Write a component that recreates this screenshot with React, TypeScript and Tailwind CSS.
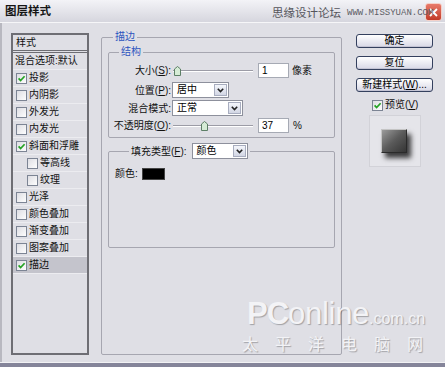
import React from 'react';

const F = "font-['Liberation_Sans','Noto_Sans_CJK_SC',sans-serif]";

function Check({ checked }: { checked?: boolean }) {
  return (
    <svg width="11" height="11" viewBox="0 0 11 11" className="shrink-0">
      <defs>
        <linearGradient id="cbg" x1="0" y1="0" x2="1" y2="1">
          <stop offset="0" stopColor="#dcdce2" />
          <stop offset="1" stopColor="#ffffff" />
        </linearGradient>
      </defs>
      <rect x="0.5" y="0.5" width="10" height="10" fill="url(#cbg)" stroke="#7c8494" />
      {checked && (
        <path d="M2.6 5.4 L4.6 7.6 L8.6 3.2" fill="none" stroke="#24a324" strokeWidth="1.7" />
      )}
    </svg>
  );
}

function Slider({ thumb }: { thumb: 'start' | 'mid' }) {
  return (
    <div className="relative w-[80px] h-[12px] ml-[2px] shrink-0">
      <div className="absolute left-0 right-0 top-[5px] h-[2px] border-t border-[#9c9ca6] border-b border-b-white" />
      <svg
        width="7"
        height="10"
        viewBox="0 0 7 10"
        className={thumb === 'start' ? 'absolute left-[1px] top-[1px]' : 'absolute left-[28px] top-[1px]'}
      >
        <path d="M3.5 0.5 L6.5 3 V9.5 H0.5 V3 Z" fill="#d6ecd6" stroke="#5d7f66" />
      </svg>
    </div>
  );
}

function Input({ value }: { value: string }) {
  return (
    <div className="ml-[5px] w-[31px] h-[15px] shrink-0 bg-white border border-[#a6aab4] text-[10px] leading-[13px] pl-[3px] text-black">
      {value}
    </div>
  );
}

function Chevron() {
  return (
    <svg width="7" height="5" viewBox="0 0 7 5">
      <path d="M0.8 0.8 L3.5 3.6 L6.2 0.8" fill="none" stroke="#222" strokeWidth="1.6" />
    </svg>
  );
}

function Select({ value, wide }: { value: string; wide: 'a' | 'b' | 'c' }) {
  const w = wide === 'a' ? 'w-[57px]' : wide === 'b' ? 'w-[71px]' : 'w-[56px]';
  return (
    <div className={`flex h-[16px] bg-white border border-[#8d909c] ${w}`}>
      <span className="flex-1 pl-[4px] text-[10px] leading-[14px] text-black">{value}</span>
      <span className="m-[1px] w-[13px] flex items-center justify-center border border-[#a8adbf] bg-gradient-to-b from-[#f4f6fb] to-[#d2d6e4]">
        <Chevron />
      </span>
    </div>
  );
}

function Btn({ children }: { children: React.ReactNode }) {
  return (
    <div className="w-[77px] h-[14px] border border-[#34405e] rounded-[3px] bg-gradient-to-b from-white to-[#d8d8e6] text-[10px] leading-[12px] text-center text-black whitespace-nowrap shadow-[inset_0_-1px_0_#c4c4d4]">
      {children}
    </div>
  );
}

function Label({ children }: { children: React.ReactNode }) {
  return <span className="w-[62px] shrink-0 flex justify-end whitespace-nowrap">{children}</span>;
}

const items: { label: string; checked?: boolean; sub?: boolean; active?: boolean; none?: boolean }[] = [
  { label: '混合选项:默认', none: true },
  { label: '投影', checked: true },
  { label: '内阴影' },
  { label: '外发光' },
  { label: '内发光' },
  { label: '斜面和浮雕', checked: true },
  { label: '等高线', sub: true },
  { label: '纹理', sub: true },
  { label: '光泽' },
  { label: '颜色叠加' },
  { label: '渐变叠加' },
  { label: '图案叠加' },
  { label: '描边', checked: true, active: true },
];

export default function App() {
  return (
    <div className={`${F} relative w-[445px] h-[367px] overflow-hidden bg-[#dfdfe5] flex flex-col text-[10px] text-[#111]`}>
      {/* title bar */}
      <div className="relative h-[23px] shrink-0 bg-gradient-to-b from-[#f3f3f7] to-[#d6d6de] border-b border-[#f6f6f8] flex items-center pl-[5px]">
        <span className="text-[11.5px] font-bold leading-[14px] text-[#151515]">图层样式</span>
        <div className="absolute right-[3px] top-[3px] w-[17px] h-[18px] rounded-[3px] border border-[#f4d0c8] bg-gradient-to-b from-[#e87a6a] to-[#c23a28] flex items-center justify-center">
          <svg width="9" height="9" viewBox="0 0 9 9">
            <path d="M1 1 L8 8 M8 1 L1 8" stroke="#fff" strokeWidth="1.8" />
          </svg>
        </div>
        <div className="absolute left-[272px] top-[6px] flex items-end whitespace-nowrap">
          <span className="text-[11.5px] leading-[13px] text-[#55555c] font-['Noto_Sans_CJK_SC',sans-serif]">思缘设计论坛</span>
          <span className="ml-[6px] text-[9px] leading-[11px] text-[#5e5e66] font-['Liberation_Mono',monospace]">WWW.MISSYUAN.COM</span>
        </div>
      </div>

      {/* body */}
      <div className="flex-1 flex items-start border-l-[2px] border-[#b8b8c0]">
        {/* left list */}
        <div className="ml-[9px] mt-[10px] w-[78px] h-[322px] shrink-0 border-2 border-[#6e6e74] bg-[#dfdfe5] flex flex-col">
          <div className="h-[15px] pl-[3px] leading-[15px]">样式</div>
          <div className="h-[3px] border-y border-[#6e6e74]" />
          {items.map((it) => (
            <div
              key={it.label}
              className={`h-[17px] flex items-center whitespace-nowrap border-b border-[#ececf0] ${it.active ? 'bg-[#c4c4cc]' : ''} ${it.sub ? 'pl-[14px]' : it.none ? 'pl-[2px]' : 'pl-[3px]'}`}
            >
              {!it.none && <Check checked={it.checked} />}
              <span className={it.none ? 'leading-[14px]' : 'ml-[2px] leading-[14px]'}>{it.label}</span>
            </div>
          ))}
        </div>

        {/* middle */}
        <fieldset className="ml-[12px] mt-[8px] w-[241px] h-[324px] shrink-0 min-w-0 border border-[#a6a6b0] rounded-[2px] pl-[6px] pr-[6px] pt-[3px]">
          <legend className="ml-[5px] px-[2px] text-[10px] leading-[12px] text-[#2c55bf]">描边</legend>

          <fieldset className="min-w-0 border border-[#a6a6b0] rounded-[2px] px-0 pt-[2px] pb-[3px]">
            <legend className="ml-[10px] px-[2px] text-[10px] leading-[12px] text-[#2c55bf]">结构</legend>
            <div className="h-[21px] flex items-center">
              <Label>
                大小(<span className="underline">S</span>):
              </Label>
              <Slider thumb="start" />
              <Input value="1" />
              <span className="ml-[3px]">像素</span>
            </div>
            <div className="h-[18px] flex items-center">
              <Label>
                位置(<span className="underline">P</span>):
              </Label>
              <span className="ml-[1px]">
                <Select value="居中" wide="a" />
              </span>
            </div>
            <div className="h-[18px] flex items-center">
              <Label>混合模式:</Label>
              <span className="ml-[1px]">
                <Select value="正常" wide="b" />
              </span>
            </div>
            <div className="h-[17px] flex items-center">
              <Label>
                不透明度(<span className="underline">O</span>):
              </Label>
              <Slider thumb="mid" />
              <Input value="37" />
              <span className="ml-[4px]">%</span>
            </div>
          </fieldset>

          <fieldset className="mt-[5px] h-[105px] min-w-0 border border-[#a6a6b0] rounded-[2px] pl-[6px] pr-0">
            <legend className="ml-[14px] px-[2px]">
              <div className="flex items-center whitespace-nowrap">
                <span>
                  填充类型(<span className="underline">F</span>):
                </span>
                <span className="ml-[5px]">
                  <Select value="颜色" wide="c" />
                </span>
              </div>
            </legend>
            <div className="mt-[8px] h-[13px] flex items-center">
              <span>颜色:</span>
              <div className="ml-[4px] w-[23px] h-[12px] bg-black border border-[#444]" />
            </div>
          </fieldset>
        </fieldset>

        {/* right */}
        <div className="ml-[14px] mt-[11px] w-[77px] shrink-0 flex flex-col">
          <Btn>确定</Btn>
          <div className="mt-[8px]">
            <Btn>复位</Btn>
          </div>
          <div className="mt-[8px]">
            <Btn>
              新建样式(<span className="underline">W</span>)...
            </Btn>
          </div>
          <div className="mt-[7px] ml-[16px] flex items-center h-[12px] whitespace-nowrap">
            <Check checked />
            <span className="ml-[2px] leading-[12px]">
              预览(<span className="underline">V</span>)
            </span>
          </div>
          <div className="mt-[4px] ml-[13px] w-[52px] h-[52px] bg-[#e5e5ea] border border-[#d2d2d8] flex items-start">
            <div className="ml-[11px] mt-[13px] w-[26px] h-[24px] bg-gradient-to-br from-[#9c9c9c] via-[#5a5a5a] to-[#353535] border-t border-l border-[#c4c4c4] border-r border-b border-r-[#2a2a2a] border-b-[#2a2a2a] shadow-[4px_5px_5px_rgba(0,0,0,0.75)]" />
          </div>
        </div>
      </div>

      {/* bottom edge */}
      <div className="h-[1px] shrink-0 bg-[#f2f2f4]" />
      <div className="h-[4px] shrink-0 bg-[#85859a]" />

      {/* watermark */}
      <div className="pointer-events-none absolute left-[242px] top-[298px] w-[200px] whitespace-nowrap text-[#f3f3f6] [text-shadow:1px_1px_1px_rgba(0,0,0,0.28)]">
        <div className="pl-[5px] flex items-baseline font-['Liberation_Sans',sans-serif]">
          <span className="text-[31px] leading-[32px] font-bold tracking-[-1px]">PC</span>
          <span className="text-[31px] leading-[32px] tracking-[-0.3px]">online</span>
          <span className="text-[16px] leading-[32px]">.com.cn</span>
        </div>
        <div className="text-[16px] leading-[16px] tracking-[17px] font-['Noto_Sans_CJK_SC',sans-serif]">太平洋电脑网</div>
      </div>
    </div>
  );
}
